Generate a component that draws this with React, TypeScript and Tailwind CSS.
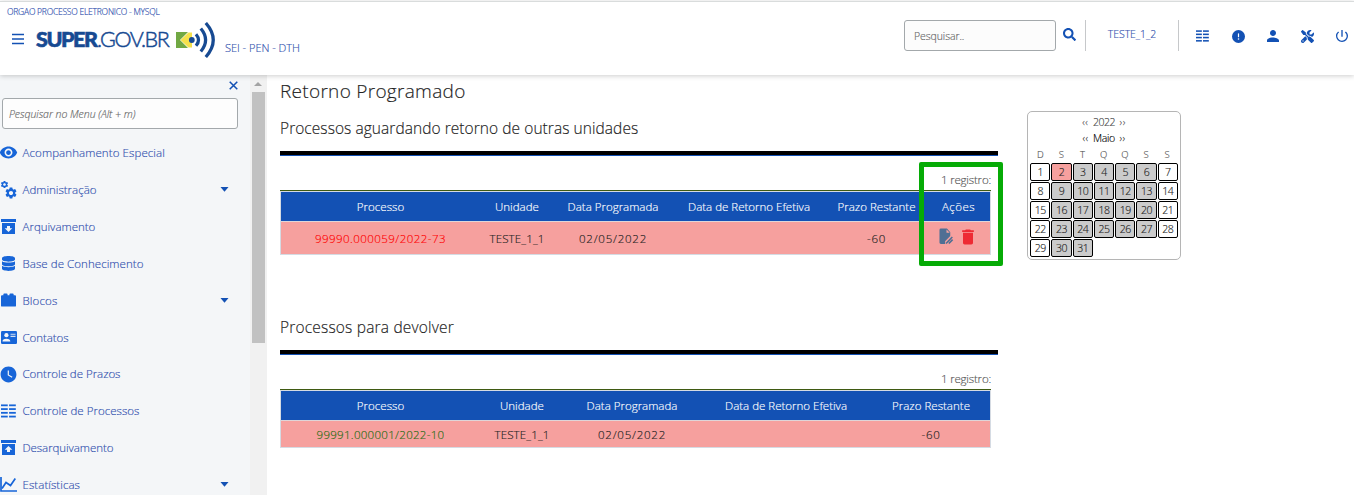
import type { ReactNode } from "react";
import { FaSearch, FaDatabase } from "react-icons/fa";
import { FaCircleExclamation, FaScrewdriverWrench } from "react-icons/fa6";
import { MdDelete, MdPerson, MdPowerSettingsNew, MdSettings, MdVisibility, MdWatchLater } from "react-icons/md";

function ListIcon({ className }: { className: string }) {
  return (
    <svg viewBox="0 0 16 14" className={className} fill="currentColor">
      {[0, 4, 8, 12].map((y) => (
        <g key={y}>
          <rect x="0" y={y} width="7.2" height="1.9" />
          <rect x="8.6" y={y} width="7.2" height="1.9" />
        </g>
      ))}
    </svg>
  );
}

function ArchiveIcon({ up }: { up?: boolean }) {
  return (
    <svg viewBox="0 0 15 15" className="h-[15px] w-[15px] shrink-0">
      <path d="M0 0h15v3H0zM1 4h13v11H1z" fill="currentColor" />
      <path
        d={up ? "M7.5 6l3.8 3.800H9V12H6V9.800H3.700z" : "M7.5 13L3.700 9.200H6V7h3v2.200h2.300z"}
        fill="#f4f6f8"
      />
    </svg>
  );
}

function GearsIcon() {
  return (
    <span className="relative block h-[18px] w-[17px]">
      <MdSettings className="absolute -top-px left-0 size-[9px]" />
      <MdSettings className="absolute top-[5px] left-[4px] size-[14px]" />
    </span>
  );
}

function BlockIcon() {
  return (
    <svg viewBox="0 0 16 14" className="h-[14px] w-[15px]" fill="currentColor">
      <path d="M1 2h1.5V1q0-1 1-1h2.500q1 0 1 1v1h2V1q0-1 1-1h2.500q1 0 1 1v1H15q1 0 1 1v10q0 1-1 1H1q-1 0-1-1V3q0-1 1-1z" />
    </svg>
  );
}

function ContactIcon() {
  return (
    <svg viewBox="0 0 16 13" className="h-[13px] w-[16px]">
      <rect width="16" height="13" rx="1.2" fill="currentColor" />
      <circle cx="5.400" cy="4.200" r="2.100" fill="#f4f6f8" />
      <path d="M1.500 10.500q0-2.800 3.900-2.800t3.900 2.800z" fill="#f4f6f8" />
      <path d="M9.500 3.200h5M9.500 5.400h5" stroke="#f4f6f8" strokeWidth="1.100" opacity=".85" />
    </svg>
  );
}

function ChartIcon() {
  return (
    <svg viewBox="0 0 17 15" className="h-[15px] w-[17px]" fill="none" stroke="currentColor" strokeWidth="1.700">
      <path d="M1 0v14h16" />
      <path d="M2 11.500 6 5.500l4.500 3L15.300 1.500" />
    </svg>
  );
}

function EditDocIcon() {
  return (
    <svg viewBox="0 0 16 18" className="h-[17px] w-[15px]">
      <path d="M2 0.500h6.500L12 4.500v4L6.500 14v3H2q-1.500 0-1.500-1.500v-13.500Q.500.500 2 .500z" fill="#4f6f94" />
      <path d="M8 1.500V5h3.500z" fill="#f6a09e" />
      <path d="M7.500 16.500 14.200 9.500M10.500 16.500l4-4.200" stroke="#4f6f94" strokeWidth="1.700" fill="none" />
    </svg>
  );
}

function SignalLogo() {
  return (
    <svg viewBox="0 0 39 36" className="h-[36px] w-[39px]">
      <path d="M0 10h12L4 18l8 8H0z" fill="#71a843" />
      <path d="M12.500 10.500h3.500v4.500l-3.500 3 3.500 3v4.500h-3.500L4.500 18z" fill="#f5e14b" />
      <circle cx="15.800" cy="18" r="2.900" fill="#174a92" />
      <g fill="none" stroke="#174a92" strokeWidth="3.200">
        <path d="M20 12.200q5 5.800 0 11.600" />
        <path d="M24.800 6.500q9.600 11.500 0 23" />
        <path d="M29.800 1q14.900 17 0 34" />
      </g>
    </svg>
  );
}

function Header() {
  return (
    <header className="relative z-10 mt-px h-[74px] border-t border-[#d9dcdc] bg-white text-[#1351b4] shadow-[0_1px_5px_rgba(0,0,0,0.2)]">
      <div className="flex h-full justify-between">
        <div className="pt-[4px]">
          <div className="pl-[7px] text-[8.5px] leading-[12px] tracking-[-0.230px] text-[#2f4fae]">
            ORGAO PROCESSO ELETRONICO - MYSQL
          </div>
          <div className="flex">
            <svg viewBox="0 0 12 12" className="mt-[15px] ml-[12px] size-[12px]" stroke="currentColor" strokeWidth="1.600">
              <path d="M0 1.500h12M0 6h12M0 10.500h12" />
            </svg>
            <div className="mt-[7px] ml-[12px] flex w-[136px] text-[21.500px] leading-[28px] text-[#174a92]">
              <span className="w-[61px] font-['Lato'] font-black tracking-[-1.450px] [-webkit-text-stroke:0.600px_#174a92]">
                SUPER
              </span>
              <span className="font-['Lato'] font-light tracking-[-1.350px] [-webkit-text-stroke:0.500px_#174a92]">
                .GOV.BR
              </span>
            </div>
            <div className="mt-[4px] ml-[4px]">
              <SignalLogo />
            </div>
            <div className="mt-[21px] ml-[10px] text-[11px] leading-[18px] tracking-[-0.020px] text-[#2f4fae]">
              SEI - PEN - DTH
            </div>
          </div>
        </div>
        <div className="flex pr-px">
          <div className="mt-[18px] flex h-[31px] w-[152px] items-center rounded-[3px] border border-[#a3a8ab] bg-[#fcfcfc] pt-[3px] pl-[9px] text-[10.5px] tracking-[-0.080px] text-[#666]">
            Pesquisar..
          </div>
          <FaSearch className="mt-[26px] ml-[7px] size-[13px]" />
          <div className="mt-[18px] ml-[9px] h-[31px] w-px bg-[#c6c8ca]" />
          <div className="mt-[18px] w-[92px] pt-[5px] text-center text-[10.5px] leading-[18px] tracking-[-0.050px] text-[#2f4fae]">
            TESTE_1_2
          </div>
          <div className="mt-[18px] h-[31px] w-px bg-[#c6c8ca]" />
          <ListIcon className="mt-[28px] ml-[17px] h-[12px] w-[13px]" />
          <FaCircleExclamation className="mt-[28px] ml-[23px] size-[13px]" />
          <MdPerson className="mt-[25px] ml-[19px] size-[18px]" />
          <FaScrewdriverWrench className="mt-[28px] ml-[19px] size-[13px]" />
          <MdPowerSettingsNew className="mt-[26px] mr-[3px] ml-[20px] size-[16px]" />
        </div>
      </div>
    </header>
  );
}

type MenuItem = { label: string; icon: ReactNode; track: string; open?: boolean };

const menu: MenuItem[] = [
  { label: "Acompanhamento Especial", icon: <MdVisibility className="size-[19px] shrink-0" />, track: "tracking-[0.090px]" },
  { label: "Administração", icon: <GearsIcon />, track: "tracking-normal", open: true },
  { label: "Arquivamento", icon: <ArchiveIcon />, track: "tracking-normal" },
  { label: "Base de Conhecimento", icon: <FaDatabase className="h-[15px] w-[13px]" />, track: "tracking-[0.060px]" },
  { label: "Blocos", icon: <BlockIcon />, track: "tracking-[0.150px]", open: true },
  { label: "Contatos", icon: <ContactIcon />, track: "tracking-[-0.070px]" },
  { label: "Controle de Prazos", icon: <MdWatchLater className="size-[19px] shrink-0" />, track: "tracking-[-0.030px]" },
  { label: "Controle de Processos", icon: <ListIcon className="h-[14px] w-[15px]" />, track: "tracking-[0.030px]" },
  { label: "Desarquivamento", icon: <ArchiveIcon up />, track: "tracking-[-0.060px]" },
  { label: "Estatísticas", icon: <ChartIcon />, track: "tracking-[0.060px]", open: true },
];

function Sidebar() {
  return (
    <aside className="flex h-[420px] w-[267px] shrink-0 bg-[#f4f6f8] text-[#1765d8]">
      <div className="w-[250px] overflow-hidden">
        <div className="flex h-[23px] justify-end pt-[6px] pr-[12px]">
          <svg viewBox="0 0 10 10" className="size-[9px]" stroke="#1351b4" strokeWidth="1.700">
            <path d="M.800.800l8.400 8.400M9.200.800.800 9.200" />
          </svg>
        </div>
        <div className="ml-[2px] flex h-[31px] w-[236px] items-center rounded-[3px] border border-[#a3a8ab] bg-[#fdfdfd] pt-[2px] pl-[6px] text-[10.500px] tracking-[-0.030px] text-[#666] italic">
          Pesquisar no Menu (Alt + m)
        </div>
        <nav className="pt-[5.400px]">
          {menu.map((m) => (
            <div key={m.label} className="flex h-[36.880px] items-center">
              <div className="flex w-[17px] shrink-0 justify-center">{m.icon}</div>
              <div className={`ml-[5.500px] flex-1 text-[11.500px] whitespace-nowrap text-[#2f4fae] ${m.track}`}>{m.label}</div>
              {m.open && (
                <svg viewBox="0 0 8 5" className="mr-[21px] h-[5px] w-[9px]" fill="#1351b4">
                  <path d="M0 0h8L4 4.800z" />
                </svg>
              )}
            </div>
          ))}
        </nav>
      </div>
      <div className="w-[17px] bg-[#f1f1f1] pt-[7px]">
        <svg viewBox="0 0 8 4" className="ml-[4px] h-[4px] w-[8px]" fill="#a3a3a3">
          <path d="M4 0l4 4H0z" />
        </svg>
        <div className="mt-[6px] ml-[2px] h-[251px] w-[13px] bg-[#c1c1c1]" />
      </div>
    </aside>
  );
}

type Cell = { text: ReactNode; className: string };

function Table({
  cols,
  head,
  row,
  rowHeight,
}: {
  cols: string;
  head: Cell[];
  row: Cell[];
  rowHeight: string;
}) {
  return (
    <div className="w-[711px] border-t border-[#3f5a12] text-[11.500px]">
      <div className="border border-[#d5dbe3]">
        <div className={`grid h-[29px] items-center bg-[#1351b4] text-center text-white ${cols}`}>
          {head.map((c, i) => (
            <div key={i} className={`whitespace-nowrap ${c.className}`}>
              {c.text}
            </div>
          ))}
        </div>
        <div className={`grid items-center border-t border-[#dfd5d8] bg-[#f6a09e] pt-[2px] text-center text-[#222] ${cols} ${rowHeight}`}>
          {row.map((c, i) => (
            <div key={i} className={`flex justify-center whitespace-nowrap ${c.className}`}>
              {c.text}
            </div>
          ))}
        </div>
      </div>
    </div>
  );
}

const head: Cell[] = [
  { text: "Processo", className: "tracking-[0.040px]" },
  { text: "Unidade", className: "tracking-[0.030px]" },
  { text: "Data Programada", className: "tracking-normal" },
  { text: "Data de Retorno Efetiva", className: "tracking-normal" },
  { text: "Prazo Restante", className: "tracking-[0.020px]" },
];

const common: Cell[] = [
  { text: "TESTE_1_1", className: "tracking-[0.150px]" },
  { text: "02/05/2022", className: "tracking-[0.760px]" },
  { text: "", className: "" },
  { text: "-60", className: "tracking-[0.720px]" },
];

function Section({ title, track, children }: { title: string; track: string; children: ReactNode }) {
  return (
    <section>
      <h2 className={`h-[33px] text-[15.500px] leading-[20px] text-[#222] ${track}`}>{title}</h2>
      <div className="h-[5px] w-[718px] border-b border-[#1351b4] bg-black" />
      <div className="h-[34px] w-[711px] pt-[15px] text-right text-[11.500px] leading-[18px] tracking-[-0.190px] text-[#555]">
        1 registro:
      </div>
      {children}
    </section>
  );
}

function Chevrons({ text }: { text: string }) {
  return <span className="text-[10px] tracking-[0.500px]">{text}</span>;
}

function Calendar() {
  return (
    <div className="mt-[36px] h-[149px] w-[154px] rounded-[5px] border border-[#b5b5b5] px-[2px] pt-[2px] text-center text-[10.500px] tracking-[-0.500px] text-[#222]">
      <div className="h-[17px] leading-[16px] text-[#444]">
        <Chevrons text="‹‹" />
        <span className="mx-[4.500px] tracking-[-0.450px]">2022</span>
        <Chevrons text="››" />
      </div>
      <div className="h-[16px] leading-[15px]">
        <Chevrons text="‹‹" />
        <span className="mx-[4.500px] tracking-[-0.350px] text-black">Maio</span>
        <Chevrons text="››" />
      </div>
      <div className="grid h-[16px] grid-cols-7 gap-x-px pr-px text-[9.500px] leading-[15px] text-[#555]">
        {["D", "S", "T", "Q", "Q", "S", "S"].map((d, i) => (
          <div key={i}>{d}</div>
        ))}
      </div>
      <div className="grid grid-cols-7 gap-px">
        {Array.from({ length: 31 }, (_, i) => {
          const bg = i === 1 ? "bg-[#f6a09e]" : i % 7 === 0 || i % 7 === 6 ? "bg-white" : "bg-[#cbcbcb]";
          return (
            <div key={i} className={`h-[18px] rounded-[2px] border border-black leading-[16px] ${bg}`}>
              {i + 1}
            </div>
          );
        })}
      </div>
    </div>
  );
}

export default function App() {
  return (
    <div className="flex h-[495px] w-[1354px] flex-col overflow-hidden bg-white font-['Open_Sans',sans-serif] font-light [-webkit-text-stroke:0.150px_currentColor]">
      <Header />
      <div className="flex">
        <Sidebar />
        <main className="ml-[13px] w-[747px]">
          <h1 className="h-[43px] pt-[4px] text-[19px] leading-[24px] tracking-[0.300px] text-[#222]">Retorno Programado</h1>
          <Section title="Processos aguardando retorno de outras unidades" track="tracking-[0.060px]">
            <div className="relative h-[127px]">
              <Table
                cols="grid-cols-[199px_74px_118px_154px_101px_63px]"
                rowHeight="h-[33px]"
                head={[...head, { text: "Ações", className: "tracking-[0.440px]" }]}
                row={[
                  { text: "99990.000059/2022-73", className: "tracking-[0.450px] text-[#ff0000]" },
                  ...common,
                  {
                    text: (
                      <span className="flex items-center gap-[5px] pb-[5px]">
                        <EditDocIcon />
                        <MdDelete className="-ml-px size-[20px] text-[#ee2a33]" />
                      </span>
                    ),
                    className: "",
                  },
                ]}
              />
              <div className="absolute -top-[28px] left-[639px] h-[104px] w-[84px] rounded-[2px] border-5 border-[#06ab06]" />
            </div>
          </Section>
          <Section title="Processos para devolver" track="tracking-[0.190px]">
            <Table
              cols="grid-cols-[199px_84px_136px_172px_118px]"
              rowHeight="h-[27px]"
              head={head}
              row={[
                { text: "99991.000001/2022-10", className: "tracking-[0.300px] text-[#1f6b12]" },
                ...common,
              ]}
            />
          </Section>
        </main>
        <Calendar />
      </div>
    </div>
  );
}
